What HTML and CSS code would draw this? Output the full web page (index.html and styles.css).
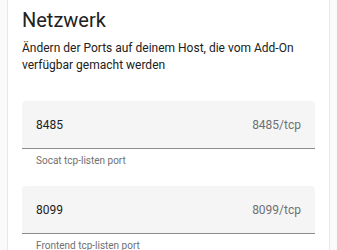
FILE: index.html
```html
<!DOCTYPE html>
<html lang="de">
<head>
<meta charset="UTF-8">
<meta name="viewport" content="width=device-width, initial-scale=1.0">
<title>Netzwerk</title>
<link rel="stylesheet" href="styles.css">
</head>
<body>
<div class="card">
    <h1>Netzwerk</h1>
    <p class="desc">Ändern der Ports auf deinem Host, die vom Add-On verfügbar gemacht werden</p>
    <div class="group">
        <div class="field">
            <span class="value">8485</span>
            <span class="suffix">8485/tcp</span>
        </div>
        <div class="helper">Socat tcp-listen port</div>
    </div>
    <div class="group">
        <div class="field">
            <span class="value">8099</span>
            <span class="suffix">8099/tcp</span>
        </div>
        <div class="helper">Frontend tcp-listen port</div>
    </div>
</div>
</body>
</html>
```

FILE: styles.css
```css
body {
    margin: 0;
    background-color: #fafafa;
    font-family: Roboto, "Liberation Sans", sans-serif;
    color: #212121;
}
.card {
    margin: 0 7px;
    height: 250px;
    overflow: hidden;
    background-color: #fff;
    border-left: 1px solid #e8e8e8;
    border-right: 1px solid #e8e8e8;
    padding: 0 14px;
}
h1 {
    margin: 0;
    padding-top: 6px;
    font-size: 20px;
    line-height: 28px;
    font-weight: 400;
}
.desc {
    margin: 6px 0 27px;
    font-size: 12px;
    line-height: 17px;
}
.group {
    margin-bottom: 19px;
}
.field {
    height: 47px;
    background-color: #f5f5f5;
    border-radius: 4px 4px 0 0;
    border-bottom: 1px solid #8c8c8c;
    padding: 0 14px;
    display: flex;
    align-items: center;
    justify-content: space-between;
    font-size: 12px;
}
.suffix {
    color: #707070;
}
.helper {
    padding: 5px 14px 0;
    font-size: 10px;
    line-height: 13px;
    color: #707070;
}
```
